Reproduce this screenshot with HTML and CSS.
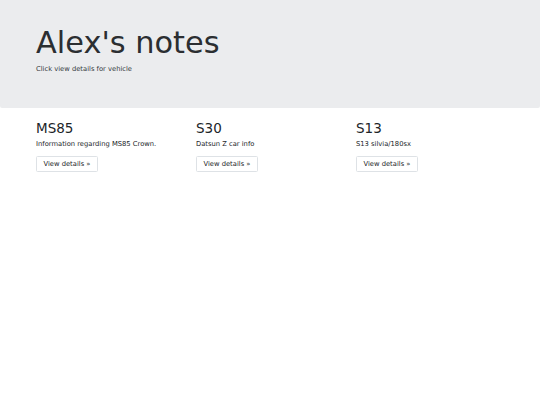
FILE: index.html
```html
<!DOCTYPE html>
<html lang="en">
<head>
    <meta charset="UTF-8">
    <meta name="viewport" content="width=device-width, initial-scale=1.0">
    <title>Alex's notes</title>
    <link rel="stylesheet" href="styles.css">
</head>
<body>
    <main>
        <div class="jumbotron">
            <div class="container">
                <h1>Alex's notes</h1>
                <p>Click view details for vehicle</p>
            </div>
        </div>

        <div class="container">
            <div class="row">
                <div class="col">
                    <h2>MS85</h2>
                    <p>Information regarding MS85 Crown.</p>
                    <p><a class="btn" href="#">View details &raquo;</a></p>
                </div>
                <div class="col">
                    <h2>S30</h2>
                    <p>Datsun Z car info</p>
                    <p><a class="btn" href="#">View details &raquo;</a></p>
                </div>
                <div class="col">
                    <h2>S13</h2>
                    <p>S13 silvia/180sx</p>
                    <p><a class="btn" href="#">View details &raquo;</a></p>
                </div>
            </div>
        </div>
    </main>
</body>
</html>
```

FILE: styles.css
```css
body {
    margin: 0;
    font-family: "DejaVu Sans", sans-serif;
    font-size: 6.75px;
    line-height: 1.5;
    color: #212529;
    background: #fff;
}
.container {
    padding: 0 36px;
}
.jumbotron {
    background: #ebecee;
    padding: 24.5px 0 26.5px;
    margin-bottom: 12px;
    border-radius: 0 0 2px 2px;
}
.jumbotron p {
    color: #343a40;
}
h1 {
    margin: 0 0 3.4px;
    font-size: 30.4px;
    font-weight: 400;
    line-height: 1.2;
    color: #2b2e31;
}
p {
    margin: 0 0 6.75px;
}
.row {
    display: grid;
    grid-template-columns: repeat(3, 160px);
}
h2 {
    margin: 0 0 3.4px;
    font-size: 13.5px;
    font-weight: 400;
    line-height: 1.2;
}
.btn {
    display: inline-block;
    padding: 2px 6.5px;
    color: #212529;
    text-decoration: none;
    background: #fff;
    border: 1px solid #dee2e6;
    border-radius: 1.5px;
}
```
